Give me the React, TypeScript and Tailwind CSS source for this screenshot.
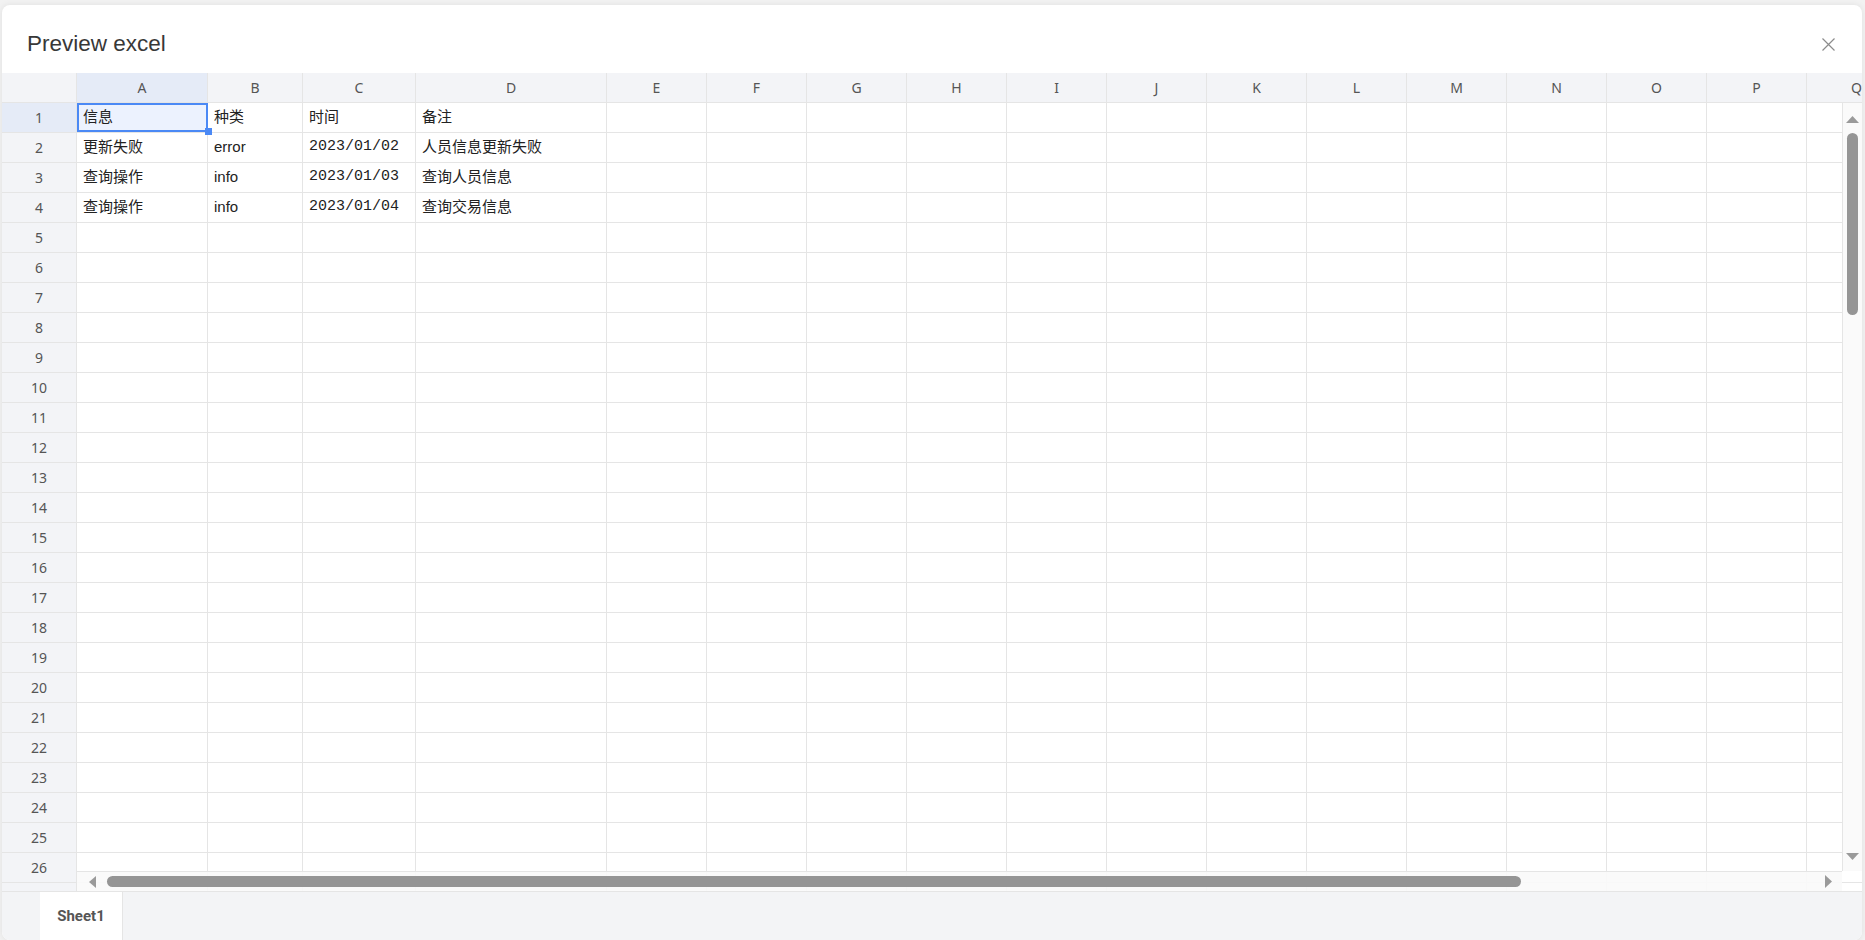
import React from "react";

const COLS: { name: string; w: string }[] = [
  { name: "A", w: "w-[131px]" },
  { name: "B", w: "w-[95px]" },
  { name: "C", w: "w-[113px]" },
  { name: "D", w: "w-[191px]" },
  ...["E", "F", "G", "H", "I", "J", "K", "L", "M", "N", "O", "P", "Q"].map((n) => ({ name: n, w: "w-[100px]" })),
];

type Cell = { t: string; mono?: boolean };
const DATA: Record<number, Cell[]> = {
  1: [{ t: "信息" }, { t: "种类" }, { t: "时间" }, { t: "备注" }],
  2: [{ t: "更新失败" }, { t: "error" }, { t: "2023/01/02", mono: true }, { t: "人员信息更新失败" }],
  3: [{ t: "查询操作" }, { t: "info" }, { t: "2023/01/03", mono: true }, { t: "查询人员信息" }],
  4: [{ t: "查询操作" }, { t: "info" }, { t: "2023/01/04", mono: true }, { t: "查询交易信息" }],
};

const ROWS = Array.from({ length: 27 }, (_, i) => i + 1);

export default function App() {
  return (
    <div className="w-full h-[940px] bg-[#f2f2f2] pl-[2px] pt-[5px] overflow-hidden">
      <div className="w-[1860px] h-[935px] bg-white rounded-[8px] overflow-hidden flex flex-col shadow-[0_0_6px_rgba(0,0,0,0.08)]">
        {/* Header */}
        <div className="h-[68px] shrink-0 flex items-center justify-between pl-[25px] pr-[27px]">
          <div className="mt-[10px] text-[22.5px] text-[#383838] font-['Liberation_Sans',Arial,sans-serif] leading-none">
            Preview excel
          </div>
          <svg className="mt-[10px]" width="13" height="13" viewBox="0 0 13 13">
            <path d="M0.5 0.5 L12.5 12.5 M12.5 0.5 L0.5 12.5" stroke="#8c8c8c" strokeWidth="1.2" fill="none" />
          </svg>
        </div>

        {/* Grid */}
        <div className="flex-1 relative overflow-hidden">
          <div className="flex flex-col w-max">
            {/* Column header row */}
            <div className="flex h-[30px] shrink-0">
              <div className="w-[75px] shrink-0 h-full bg-[#f3f4f7] border-r border-b border-[#e5e5e5]" />
              {COLS.map((c) => (
                <div
                  key={c.name}
                  className={`${c.w} shrink-0 h-full flex items-center justify-center border-r border-b border-[#e5e5e5] text-[14px] text-[#555555] font-['Noto_Sans',sans-serif] ${
                    c.name === "A" ? "bg-[#e5ebf7]" : "bg-[#f3f4f7]"
                  }`}
                >
                  {c.name}
                </div>
              ))}
            </div>
            {ROWS.map((r) => (
              <div key={r} className="flex h-[30px] shrink-0">
                <div
                  className={`w-[75px] shrink-0 h-full flex items-center justify-center border-r border-b border-[#e5e5e5] text-[14px] text-[#555555] font-['Noto_Sans',sans-serif] ${
                    r === 1 ? "bg-[#e5ebf7]" : "bg-[#f3f4f7]"
                  }`}
                >
                  {r <= 26 ? r : ""}
                </div>
                {COLS.map((c, ci) => {
                  const cell = DATA[r]?.[ci];
                  const selected = r === 1 && ci === 0;
                  return (
                    <div
                      key={c.name}
                      className={`${c.w} shrink-0 h-full relative flex items-center pl-[6px] border-r border-b border-[#e5e5e5] text-[15px] text-[#222222] whitespace-nowrap ${
                        selected ? "bg-[#ecf2fe]" : "bg-white"
                      } ${
                        cell?.mono
                          ? "font-['Liberation_Mono',monospace]"
                          : "font-['Liberation_Sans','Noto_Sans_CJK_SC',sans-serif]"
                      }`}
                    >
                      {cell?.t}
                      {selected && (
                        <>
                          <div className="absolute left-0 top-0 -right-px bottom-0 border-2 border-[#4b89f5]" />
                          <div className="absolute -right-[5px] -bottom-[3px] w-[7px] h-[7px] bg-[#4b89f5] z-10" />
                        </>
                      )}
                    </div>
                  );
                })}
              </div>
            ))}
          </div>

          {/* Vertical scrollbar */}
          <div className="absolute right-0 top-[30px] bottom-[20px] w-[20px] bg-[#fafafa] border-l border-[#e5e5e5]">
            <svg className="absolute left-[3px] top-[13px]" width="13" height="7" viewBox="0 0 13 7">
              <path d="M0 7 L6.5 0 L13 7 Z" fill="#9a9a9a" />
            </svg>
            <div className="absolute left-[4px] top-[30px] w-[11px] h-[182px] rounded-full bg-[#959595]" />
            <svg className="absolute left-[3px] bottom-[11px]" width="13" height="7" viewBox="0 0 13 7">
              <path d="M0 0 L6.5 7 L13 0 Z" fill="#9a9a9a" />
            </svg>
          </div>

          {/* Horizontal scrollbar */}
          <div className="absolute left-[75px] right-[20px] bottom-0 h-[20px] bg-[#fafafa]/90 border-t border-[#e5e5e5]">
            <svg className="absolute left-[12px] top-[4px]" width="7" height="12" viewBox="0 0 7 12">
              <path d="M7 0 L0 6 L7 12 Z" fill="#9a9a9a" />
            </svg>
            <div className="absolute left-[30px] top-[4px] w-[1414px] h-[11px] rounded-full bg-[#959595]" />
            <svg className="absolute right-[10px] top-[3px]" width="7" height="13" viewBox="0 0 7 13">
              <path d="M0 0 L7 6.5 L0 13 Z" fill="#9a9a9a" />
            </svg>
          </div>
        </div>

        {/* Sheet tabs */}
        <div className="h-[49px] shrink-0 bg-[#f3f4f6] border-t border-[#e5e5e5] flex">
          <div className="ml-[38px] w-[83px] h-full bg-white border-r border-[#e5e5e5] flex items-center justify-center text-[15px] font-bold text-[#555555] font-['Roboto','Liberation_Sans',sans-serif]">
            Sheet1
          </div>
        </div>
      </div>
    </div>
  );
}
